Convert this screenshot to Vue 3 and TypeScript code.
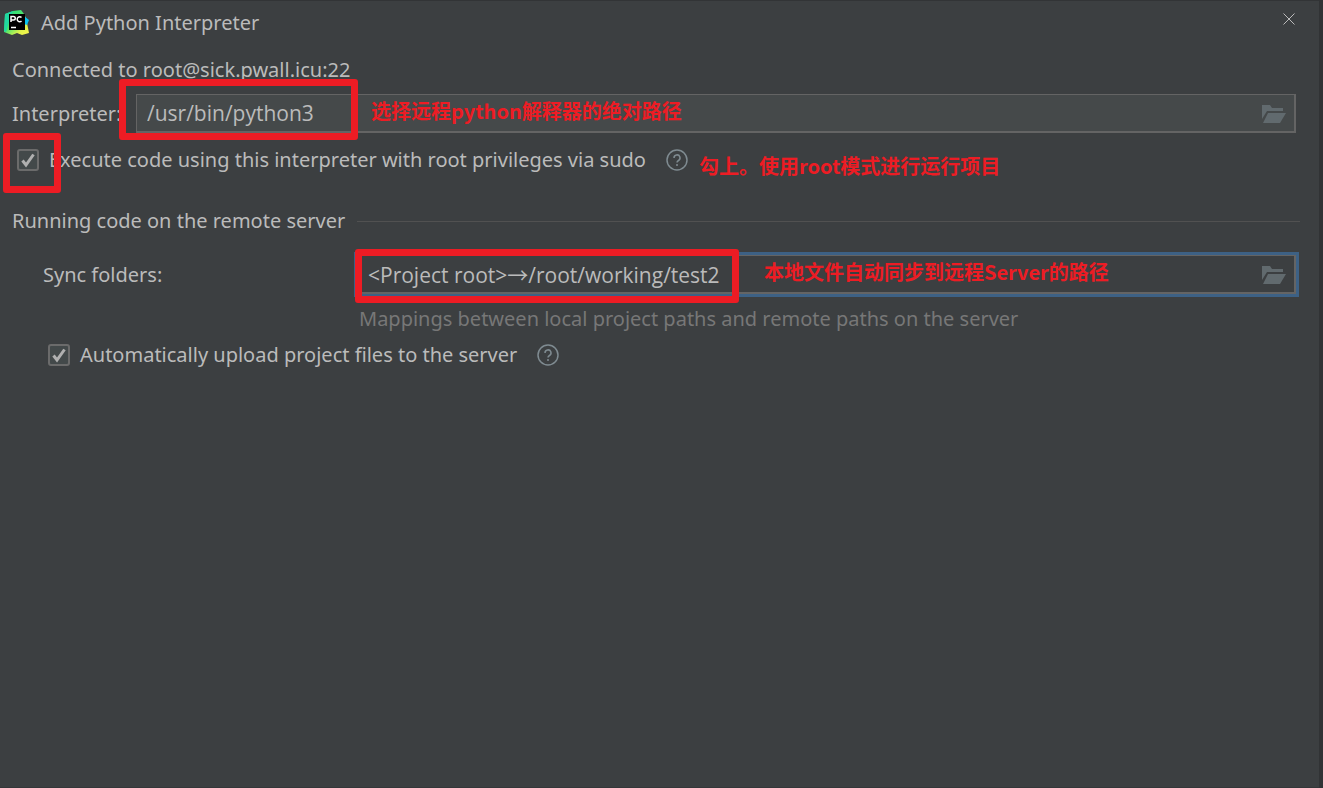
<script setup lang="ts">
import { ref } from 'vue'

const interpreter = ref('/usr/bin/python3')
const syncFolders = ref('<Project root>→/root/working/test2')
const useSudo = ref(true)
const autoUpload = ref(true)
</script>

<template>
  <div class="window">
    <main class="dialog">
      <header class="titlebar">
        <svg class="logo" viewBox="0 0 26 26" aria-hidden="true">
          <defs>
            <linearGradient id="edge" x1="0" y1="0" x2="1" y2="1">
              <stop offset="0" stop-color="#21d789" />
              <stop offset="0.45" stop-color="#4be56b" />
              <stop offset="0.75" stop-color="#dff34a" />
              <stop offset="1" stop-color="#fcf84a" />
            </linearGradient>
          </defs>
          <path d="M1 4 9 1 17 0 20 4 22 8 25 23 18 25 13 23 8 25 0 22Z" fill="url(#edge)" />
          <path d="M20 6 25 10 23 15 20 14Z" fill="#07c3f2" />
          <path d="M1 4 9 1 5 12 2 22 0 21Z" fill="#21d7a0" />
          <path d="M5 4H21V20H5Z" fill="#000" />
          <path d="M7 12V6.500H9.500A1.600 1.600 0 0 1 9.500 10H7M17.500 7.500A2.500 2.500 0 1 0 17.500 11M7 17.500H12" fill="none" stroke="#fff" stroke-width="1.500" />
        </svg>
        <h1>Add Python Interpreter</h1>
        <button class="close" type="button" aria-label="Close">
          <svg viewBox="0 0 12 12"><path d="M.5.5 11.500 11.500M11.500.5.5 11.500" /></svg>
        </button>
      </header>

      <p class="connected">Connected to root@sick.pwall.icu:22</p>

      <div class="row interpreter-row">
        <label for="interpreter">Interpreter:</label>
        <div class="field">
          <input id="interpreter" v-model="interpreter" type="text" />
          <button class="browse" type="button" aria-label="Browse interpreter">
            <svg viewBox="0 0 24 18"><path d="M0 0H8L10 3H21V6H5L0 14Z" /><path d="M6 8H24L18 18H1Z" /></svg>
          </button>
          <span class="mark mark-path"></span>
          <span class="note note-path">选择远程python解释器的绝对路径</span>
        </div>
      </div>

      <div class="row check-row">
        <span class="tick">
          <input id="sudo" v-model="useSudo" type="checkbox" />
          <svg viewBox="0 0 22 22"><path d="M5.500 11.500 9 16 16.500 5.500" /></svg>
          <span class="mark mark-check"></span>
        </span>
        <label for="sudo">Execute code using this interpreter with root privileges via sudo</label>
        <button class="help" type="button" aria-label="Help about sudo">
          <svg viewBox="0 0 22 22"><circle cx="11" cy="11" r="10" /><path d="M8 9A3 3 0 1 1 12.500 11.500Q11 12.300 11 13.500M11 15V17" /></svg>
        </button>
        <span class="note-inline">勾上。使用root模式进行运行项目</span>
      </div>

      <h2 class="section">Running code on the remote server</h2>

      <div class="row sync-row">
        <label for="sync">Sync folders:</label>
        <div class="field focused">
          <input id="sync" v-model="syncFolders" type="text" />
          <button class="browse" type="button" aria-label="Browse sync folders">
            <svg viewBox="0 0 24 18"><path d="M0 0H8L10 3H21V6H5L0 14Z" /><path d="M6 8H24L18 18H1Z" /></svg>
          </button>
          <span class="mark mark-sync"></span>
          <span class="note note-sync">本地文件自动同步到远程Server的路径</span>
        </div>
      </div>
      <p class="hint">Mappings between local project paths and remote paths on the server</p>

      <div class="row check-row upload-row">
        <span class="tick">
          <input id="upload" v-model="autoUpload" type="checkbox" />
          <svg viewBox="0 0 22 22"><path d="M5.500 11.500 9 16 16.500 5.500" /></svg>
        </span>
        <label for="upload">Automatically upload project files to the server</label>
        <button class="help" type="button" aria-label="Help about automatic upload">
          <svg viewBox="0 0 22 22"><circle cx="11" cy="11" r="10" /><path d="M8 9A3 3 0 1 1 12.500 11.500Q11 12.300 11 13.500M11 15V17" /></svg>
        </button>
      </div>
    </main>
  </div>
</template>

<style>
body { background: #313335; }
</style>

<style scoped>
* { box-sizing: border-box; }
.window {
  min-height: 100vh;
  padding-right: 4px;
  display: flex;
  background: #313335;
  font-family: "Noto Sans", "Noto Sans CJK SC", sans-serif;
  font-size: 20px;
  line-height: 28px;
  color: #bbb;
}
.dialog {
  flex: 1;
  min-width: 0;
  background: #3c3f41;
  border-top: 1px solid #323436;
  border-bottom: 1px solid #343739;
}
h1, h2, p { margin: 0; font-size: 20px; font-weight: 400; }
button { padding: 0; border: 0; background: none; display: flex; }
svg { display: block; }
.titlebar { display: flex; align-items: center; height: 44px; padding: 0 24px 0 4px; }
.logo { width: 26px; height: 26px; margin-right: 11px; }
.close { margin: 0 0 8px auto; }
.close svg { width: 12px; height: 12px; }
.close path { stroke: #bbb; stroke-width: 1; fill: none; }
.connected { margin: 11px 12px 10px; }
.row { display: flex; align-items: center; }
.interpreter-row { padding: 0 23px 0 12px; }
.interpreter-row > label { width: 124px; }
.field {
  position: relative;
  flex: 1;
  min-width: 0;
  height: 39px;
  display: flex;
  align-items: center;
  padding-right: 8px;
  background: #45494a;
  border: 1px solid #646464;
  border-bottom-width: 2px;
  border-right-width: 2px;
}
.field input {
  flex: 1;
  min-width: 0;
  height: 100%;
  padding: 0 0 0 10px;
  border: 0;
  outline: 0;
  background: none;
  color: #bbb;
  font: 21px "Open Sans", "Noto Sans CJK SC", sans-serif;
}
.browse { padding-top: 2px; }
.browse svg { width: 24px; height: 18px; }
.browse path { fill: #616a6e; }
.focused { background: #3c3f41; box-shadow: 0 0 0 3px #3d6185; }
.mark { position: absolute; border: 7px solid #ed1c24; border-radius: 3px; pointer-events: none; }
.mark-path { left: -18px; top: -16px; width: 239px; height: 61px; }
.mark-check { left: -14px; top: -16px; width: 58px; height: 60px; }
.mark-sync { left: -3px; top: -7px; width: 384px; height: 54px; }
.note, .note-inline {
  color: #ed1c24;
  font-family: "Noto Sans CJK SC", sans-serif;
  font-weight: 700;
  font-size: 20px;
  white-space: nowrap;
}
.note { position: absolute; top: 2px; pointer-events: none; }
.note-path { left: 234px; }
.note-sync { left: 406px; }
.note-inline { margin: 12px 0 0 11px; }
.check-row { height: 40px; margin-top: 7px; padding-left: 17px; }
.tick { position: relative; width: 22px; height: 22px; margin-right: 10px; }
.tick input {
  appearance: none;
  display: block;
  width: 22px;
  height: 22px;
  margin: 0;
  border: 2px solid #6b6b6b;
  border-radius: 3px;
  background: #43494a;
}
.tick svg { position: absolute; inset: 0; pointer-events: none; visibility: hidden; }
.tick input:checked + svg { visibility: visible; }
.tick path { fill: none; stroke: #b0b0b0; stroke-width: 3; }
.help { margin-left: 20px; }
.help svg { width: 22px; height: 22px; }
.help svg * { fill: none; stroke: #7f8b91; stroke-width: 1.500; }
.section { display: flex; align-items: center; gap: 12px; margin: 27px 19px 0 12px; }
.section::after { content: ""; flex: 1; height: 1px; background: #515151; }
.sync-row { padding: 0 23px 0 43px; margin-top: 20px; }
.sync-row > label { width: 314px; }
.hint { margin: 11px 24px 0 359px; color: #777; }
.upload-row { margin-top: 2px; padding-left: 48px; }
</style>
